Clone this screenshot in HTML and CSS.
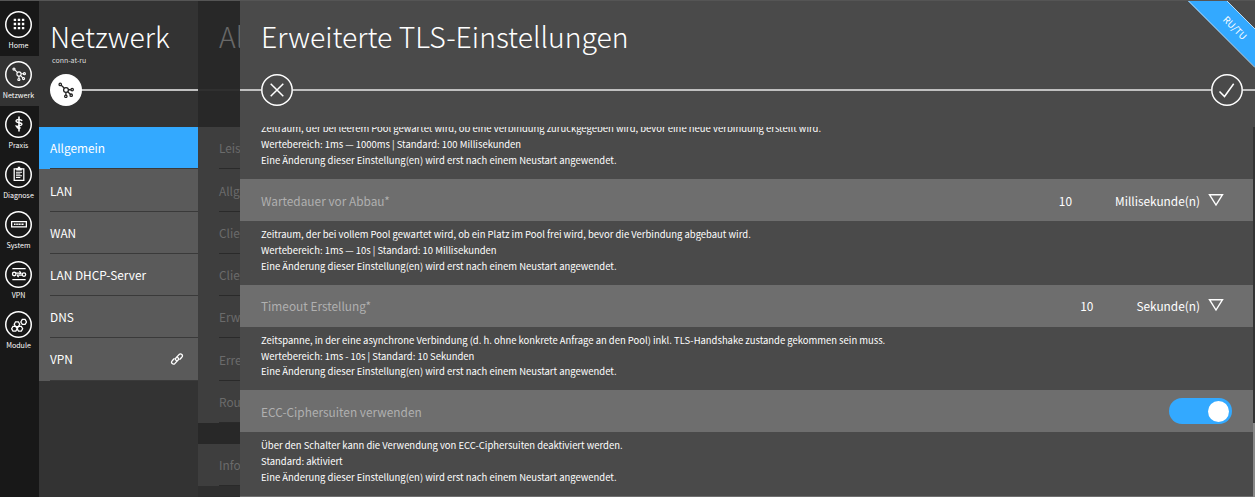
FILE: index.html
```html
<!DOCTYPE html>
<html lang="de">
<head>
<meta charset="utf-8">
<title>Erweiterte TLS-Einstellungen</title>
<link rel="stylesheet" href="styles.css">
</head>
<body>
<svg class="defs" width="0" height="0">
  <symbol id="net" viewBox="0 0 20 20"><g fill="none" stroke="currentColor" stroke-width="1.6"><circle cx="10" cy="10" r="3"/><circle cx="2.800" cy="3" r="1.500"/><circle cx="17.700" cy="9.500" r="1.500"/><circle cx="9.800" cy="17.900" r="1.500"/><circle cx="16.500" cy="16.500" r="1.500"/><path d="M4 4l3.700 3.600M13 9.700h3.100M9.900 13v3.300M12.200 12.200l3.200 3.200"/></g></symbol>
</svg>
<div class="app">
  <nav class="rail">
    <a class="nav"><span class="ring"><svg viewBox="0 0 20 20"><path fill="currentColor" d="M3.400 3.400h3v3h-3zm5.100 0h3v3h-3zm5.100 0h3v3h-3zM3.400 8.500h3v3h-3zm5.100 0h3v3h-3zm5.100 0h3v3h-3zM3.400 13.600h3v3h-3zm5.100 0h3v3h-3zm5.100 0h3v3h-3z"/></svg></span><span class="cap">Home</span></a>
    <a class="nav active"><span class="ring"><svg><use href="#net"/></svg></span><span class="cap">Netzwerk</span></a>
    <a class="nav"><span class="ring"><svg viewBox="0 0 20 20" fill="none" stroke="currentColor"><path stroke-width="2" d="M10 .5v19"/><path stroke-width="1.700" d="M14 6.200C12.500 4 6.300 3.400 6.300 6.300s7.400 1.400 7.400 4-6 1.200-6 3.500 3.500 1.300 4.300.8M6 11.500c0 2 2.500 3 5 4.500"/></svg></span><span class="cap">Praxis</span></a>
    <a class="nav"><span class="ring"><svg viewBox="0 0 20 20" fill="none" stroke="currentColor"><path stroke-width="1.600" d="M4 3.700h12v14.300H4z"/><path fill="currentColor" stroke="none" d="M6.500 2.800h2V1h3v1.800h2v2.700h-7z"/><path stroke-width="1.300" d="M6.200 7.700h7.600M6.200 9.900h5.500M6.200 12.100h7.600M6.200 14.300h5.500"/></svg></span><span class="cap">Diagnose</span></a>
    <a class="nav"><span class="ring"><svg viewBox="0 0 20 20" fill="none" stroke="currentColor"><path stroke-width="1.600" d="M.8 7h18.400v6.500H.8z"/><path stroke-width="1.700" stroke-dasharray="1.500 .5" d="M3.700 10.300h12.600"/></svg></span><span class="cap">System</span></a>
    <a class="nav"><span class="ring"><svg viewBox="0 0 20 20" fill="none" stroke="currentColor" stroke-width="1.600"><path d="M1.700 3.300h16.600M1.700 17h16.600M6 9h6.500M14 11.500H7.500"/><circle cx="4" cy="10" r="2.200"/><circle cx="16.200" cy="10.700" r="2.200"/><path d="M10.500 6.500l2 2.500-2 .8M9.500 14l-2-2.500"/></svg></span><span class="cap">VPN</span></a>
    <a class="nav"><span class="ring"><svg viewBox="0 0 20 20" fill="none" stroke="currentColor" stroke-width="1.600"><path d="M4 9l1.700-3h3.500l1.700 3-1.700 3H5.700zM.8 14.700l1.700-3H6l1.700 3-1.700 3H2.500zM7.700 14.700l1.700-3h3.500l1.700 3-1.700 3H9.400zM12.300 6.200l1.800-3.100h3.500l1.800 3.100-1.800 3.100h-3.500z"/></svg></span><span class="cap">Module</span></a>
  </nav>

  <section class="level main">
    <header class="head">
      <h1>Netzwerk</h1>
      <div class="sub">conn-at-ru</div>
      <div class="line"><span class="badge"><svg><use href="#net"/></svg></span></div>
    </header>
    <ul class="menu">
      <li class="selected">Allgemein</li>
      <li>LAN</li>
      <li>WAN</li>
      <li>LAN DHCP-Server</li>
      <li>DNS</li>
      <li class="last">VPN<svg class="link" viewBox="0 0 14 14" fill="none" stroke="currentColor" stroke-width="1.300" stroke-linecap="round"><path d="M6.300 8.500c-1-.7-1.100-1.900-.2-2.800L9 2.600c2-1.800 4.600.5 2.800 2.600L9.900 7.300M7.700 5.500c1 .7 1.100 1.900.2 2.800L5 11.400c-2 1.800-4.600-.5-2.800-2.600l1.900-2.100"/></svg></li>
    </ul>
  </section>

  <section class="level behind">
    <header class="head">
      <h1>Al</h1>
      <div class="sub"></div>
      <div class="line"></div>
    </header>
    <ul class="menu">
      <li>Leis</li>
      <li>Allg</li>
      <li>Clie</li>
      <li>Clie</li>
      <li>Erw</li>
      <li>Erre</li>
      <li>Rou</li>
    </ul>
    <ul class="menu second">
      <li>Info</li>
      <li class="rest"></li>
    </ul>
  </section>

  <section class="level detail">
    <header class="head">
      <h1>Erweiterte TLS-Einstellungen</h1>
      <div class="sub"></div>
      <div class="line">
        <button class="round"><svg viewBox="0 0 32 32"><circle cx="16" cy="16" r="15.200"/><path d="M9.700 9.700l12.600 12.600M22.300 9.700L9.700 22.300"/></svg></button>
        <button class="round"><svg viewBox="0 0 32 32"><circle cx="16" cy="16" r="15.200"/><path d="M8.500 17.500l5 5 9.200-12.700"/></svg></button>
      </div>
    </header>
    <div class="body">
      <div class="settings">
        <p class="desc first">Zeitraum, der bei leerem Pool gewartet wird, ob eine Verbindung zurückgegeben wird, bevor eine neue Verbindung erstellt wird.<br>Wertebereich: 1ms — 1000ms | Standard: 100 Millisekunden<br>Eine Änderung dieser Einstellung(en) wird erst nach einem Neustart angewendet.</p>
        <div class="row"><span class="name">Wartedauer vor Abbau*</span><span class="value">10</span><span class="unit">Millisekunde(n)</span><svg class="tri" viewBox="0 0 16 14"><path d="M1.500 1.700h13L8 12z"/></svg></div>
        <p class="desc">Zeitraum, der bei vollem Pool gewartet wird, ob ein Platz im Pool frei wird, bevor die Verbindung abgebaut wird.<br>Wertebereich: 1ms — 10s | Standard: 10 Millisekunden<br>Eine Änderung dieser Einstellung(en) wird erst nach einem Neustart angewendet.</p>
        <div class="row"><span class="name">Timeout Erstellung*</span><span class="value">10</span><span class="unit">Sekunde(n)</span><svg class="tri" viewBox="0 0 16 14"><path d="M1.500 1.700h13L8 12z"/></svg></div>
        <p class="desc">Zeitspanne, in der eine asynchrone Verbindung (d. h. ohne konkrete Anfrage an den Pool) inkl. TLS-Handshake zustande gekommen sein muss.<br>Wertebereich: 1ms - 10s | Standard: 10 Sekunden<br>Eine Änderung dieser Einstellung(en) wird erst nach einem Neustart angewendet.</p>
        <div class="row"><span class="name">ECC-Ciphersuiten verwenden</span><span class="toggle"><span class="knob"></span></span></div>
        <p class="desc">Über den Schalter kann die Verwendung von ECC-Ciphersuiten deaktiviert werden.<br>Standard: aktiviert<br>Eine Änderung dieser Einstellung(en) wird erst nach einem Neustart angewendet.</p>
        <div class="row"></div>
      </div>
      <div class="track"><div class="thumb"></div></div>
    </div>
    <svg class="ribbon" viewBox="0 0 68 68"><path class="band" d="M0 0h39l29 29v38z"/><path class="edge" d="M0-.5l68 68M38.500-.5l30 30"/><text x="48" y="31.500" transform="rotate(45 48 28)">RU/TU</text></svg>
  </section>
</div>
</body>
</html>
```
FILE: styles.css
```css
* { box-sizing: border-box; }
body { margin: 0; background: #181818; color: #fff; overflow: hidden; font-family: "Noto Sans CJK SC", "Open Sans", sans-serif; }
.defs { display: block; height: 0; }
.app { display: flex; width: 1255px; height: 497px; border-top: 1px solid #555; }

.rail { width: 39px; padding-top: 5px; background: #181818; flex: none; }
.nav { display: flex; flex-direction: column; align-items: center; height: 50.1px; padding-top: 4.500px; }
.nav.active { background: #333; }
.ring { display: flex; align-items: center; justify-content: center; width: 27px; height: 27px; margin-right: 2px; box-shadow: inset 0 0 0 1.500px #fff; border-radius: 50%; flex: none; }
.ring svg { width: 16px; height: 16px; }
.active .ring svg { width: 14px; height: 14px; }
.cap { font-size: 7.100px; line-height: 10px; margin: 2.400px 2px 0 0; white-space: nowrap; }

.level { display: flex; flex-direction: column; flex: none; overflow: hidden; }
.head { height: 126px; flex: none; }
h1 { margin: 0; padding: 11px 0 0 11px; font-size: 28.350px; line-height: 48px; height: 59px; font-weight: 300; white-space: nowrap; }
.sub { height: 14px; padding-left: 13px; font-size: 7px; line-height: 0; }
.line { display: flex; align-items: center; height: 32px; background: linear-gradient(#c0c0c0, #c0c0c0) 0 15px / 100% 2px no-repeat; }

.main { width: 159px; background: #333; }
.main .sub { color: #ddd; }
.main .line { background-position: 40px 15px; }
.badge { display: flex; align-items: center; justify-content: center; width: 32px; height: 32px; margin-left: 11px; border-radius: 50%; background: #fff; color: #222; }
.badge svg { width: 16px; height: 16px; }
.menu { list-style: none; margin: 0; padding: 0; font-size: 11.860px; }
.menu li { display: flex; align-items: center; height: 42.250px; padding: 0 14px .5px 11px; background: linear-gradient(#3a3a3a, #3a3a3a) 11px 100% / 100% 1px no-repeat #5a5a5a; }
.menu li.selected { padding-bottom: 1px; background-color: #33a9ff; }
.menu li.last { padding-bottom: 1.500px; }
.link { width: 14px; height: 14px; margin-left: auto; }

.behind { width: 42px; background: #282828; color: #6b6b6b; }
.behind h1 { padding-left: 21px; color: #686868; overflow: hidden; }
.behind .line { background: linear-gradient(#303030, #303030) 0 15px / 100% 2px no-repeat; }
.behind .menu li { padding: 0 0 .5px 21px; white-space: nowrap; background: linear-gradient(#2a2a2a, #2a2a2a) 21px 100% / 100% 1px no-repeat #3e3e3e; }
.menu.second { margin-top: 21px; }
.behind .menu li.rest { background: #2f2f2f; }

.detail { position: relative; width: 1015px; background: #4a4a4a; }
.detail h1 { padding-left: 21px; }
.detail .line { justify-content: space-between; padding: 0 12px 0 21px; }
.round { width: 32px; height: 32px; padding: 0; border: 0; border-radius: 50%; background: #4a4a4a; }
.round svg { display: block; width: 32px; height: 32px; fill: none; stroke: #fff; stroke-width: 1.500; }
.body { display: flex; flex: 1; min-height: 0; overflow: hidden; }
.settings { flex: 1; }
.desc { margin: 0; height: 63.600px; padding: 6px 21px 0; font-size: 9.460px; line-height: 15.900px; white-space: nowrap; }
.desc.first { padding-top: 0; margin-top: -5.600px; height: 57.600px; }
.row { display: flex; align-items: center; height: 42px; padding: 0 21px; background: #6e6e6e; font-size: 11.860px; }
.name { color: #b0b0b0; margin-right: auto; }
.value { margin-right: 43px; }
.unit { margin-right: 8px; }
.tri { width: 16px; height: 14px; margin: 0 8px 1px 0; fill: none; stroke: #fff; stroke-width: 1.400; }
.toggle { display: flex; align-items: center; justify-content: flex-end; width: 63px; height: 26px; padding-right: 3px; border-radius: 13px; background: #33a9ff; }
.knob { width: 21px; height: 21px; border-radius: 50%; background: #fff; }
.track { width: 2px; background: #333; padding-top: 296px; }
.thumb { height: 100px; background: #888; }

.ribbon { position: absolute; top: -1px; right: 0; width: 68px; height: 68px; }
.band { fill: #33a9ff; }
.edge { fill: none; stroke: #b5dcf8; stroke-width: 1; }
.ribbon text { fill: #fff; font-size: 9.500px; text-anchor: middle; }
```
